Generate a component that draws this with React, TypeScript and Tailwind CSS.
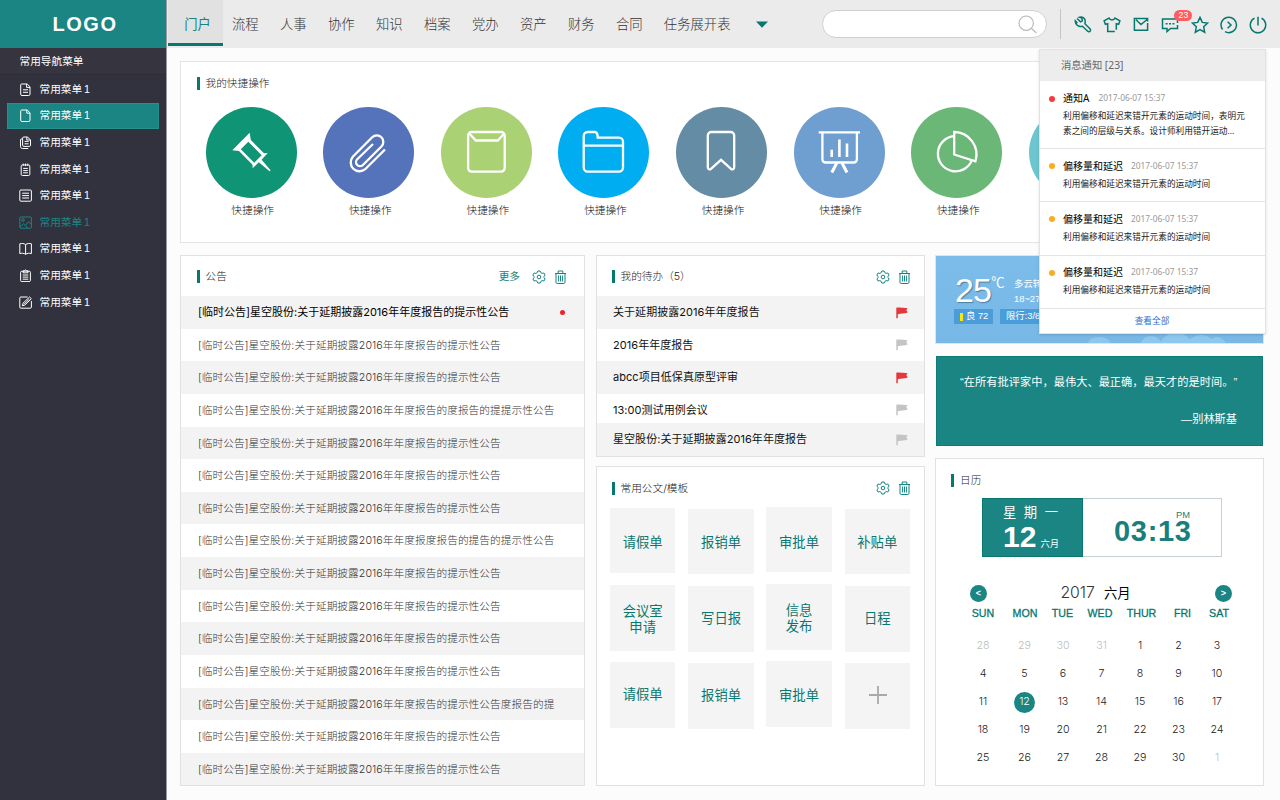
import { ReactNode } from "react";

const navItems = ["流程", "人事", "协作", "知识", "档案", "党办", "资产", "财务", "合同", "任务展开表"];

const notices = [
  "[临时公告]星空股份:关于延期披露2016年年度报告的提示性公告",
  "[临时公告]星空股份:关于延期披露2016年年度报告的提示性公告",
  "[临时公告]星空股份:关于延期披露2016年年度报告的提示性公告",
  "[临时公告]星空股份:关于延期披露2016年年度报告的度报告的提提示性公告",
  "[临时公告]星空股份:关于延期披露2016年年度报告的提示性公告",
  "[临时公告]星空股份:关于延期披露2016年年度报告的提示性公告",
  "[临时公告]星空股份:关于延期披露2016年年度报告的提示性公告",
  "[临时公告]星空股份:关于延期披露2016年年度报度报告的提告的提示性公告",
  "[临时公告]星空股份:关于延期披露2016年年度报告的提示性公告",
  "[临时公告]星空股份:关于延期披露2016年年度报告的提示性公告",
  "[临时公告]星空股份:关于延期披露2016年年度报告的提示性公告",
  "[临时公告]星空股份:关于延期披露2016年年度报告的提示性公告",
  "[临时公告]星空股份:关于延期披露2016年年度报告的提示性公告度报告的提",
  "[临时公告]星空股份:关于延期披露2016年年度报告的提示性公告",
  "[临时公告]星空股份:关于延期披露2016年年度报告的提示性公告",
];

const todos = [
  { text: "关于延期披露2016年年度报告", urgent: true, row: "h-[33px] bg-[#f3f3f3]" },
  { text: "2016年年度报告", urgent: false, row: "h-8" },
  { text: "abcc项目低保真原型评审", urgent: true, row: "h-[33px] bg-[#f3f3f3]" },
  { text: "13:00测试用例会议", urgent: false, row: "h-[29px] pt-[3px]" },
  { text: "星空股份:关于延期披露2016年年度报告", urgent: false, row: "h-[33px] bg-[#f3f3f3]" },
];

const messages = [
  { title: "偏移量和延迟", time: "2017-06-07 15:37", body: "利用偏移和延迟来错开元素的运动时间" },
  { title: "偏移量和延迟", time: "2017-06-07 15:37", body: "利用偏移和延迟来错开元素的运动时间" },
  { title: "偏移量和延迟", time: "2017-06-07 15:37", body: "利用偏移和延迟来错开元素的运动时间" },
];

const templateColumns = [
  {
    offset: "mt-px",
    tiles: [
      { text: "请假单", pad: "pt-[4px]" },
      { text: "会议室\n申请", pad: "pt-[5px]" },
      { text: "请假单", pad: "" },
    ],
  },
  {
    offset: "mt-[2px] ml-[13px]",
    tiles: [
      { text: "报销单", pad: "pt-[2px]" },
      { text: "写日报", pad: "" },
      { text: "报销单", pad: "" },
    ],
  },
  {
    offset: "ml-[12.500px]",
    tiles: [
      { text: "审批单", pad: "pt-[6px]" },
      { text: "信息\n发布", pad: "pt-[4px]" },
      { text: "审批单", pad: "pt-[3px]" },
    ],
  },
  {
    offset: "mt-[2px] ml-[13.400px]",
    tiles: [
      { text: "补贴单", pad: "pr-[1px] pt-[2px]" },
      { text: "日程", pad: "pr-[1px]" },
      { text: "+", pad: "pb-[3px]" },
    ],
  },
];

const weekdays = ["SUN", "MON", "TUE", "WED", "THUR", "FRI", "SAT"];
const days = [28, 29, 30, 31, ...Array.from({ length: 30 }, (_, i) => i + 1), 1];

const menuIcons: ReactNode[] = [
  <>
    <path d="M2.5 1h5.7l2.8 2.8v7.4a1.3 1.3 0 0 1-1.3 1.3H3a1.3 1.3 0 0 1-1.3-1.3V1.8A.8.8 0 0 1 2.5 1z" />
    <path d="M7.6 1v3.4H11M4 6.8h5M4 9.3h5" />
  </>,
  <>
    <path d="M2.8 1h5.4l2.8 2.8v7.4a1.3 1.3 0 0 1-1.3 1.3H3a1.3 1.3 0 0 1-1.3-1.3V2.1A1.1 1.1 0 0 1 2.8 1z" />
    <path d="M7.8 1v3.2H11" />
  </>,
  <>
    <path d="M5 1h3.6L11.5 4v5.2a1.2 1.2 0 0 1-1.2 1.2H4.8a1.2 1.2 0 0 1-1.2-1.2V2.2A1.2 1.2 0 0 1 4.8 1z" />
    <path d="M3.6 2.6 1.5 3.4v7.2c0 1 .8 1.9 1.9 1.9h5.8M5.6 5.4h4M5.6 7.8h4M7.8 1v3h3.4" />
  </>,
  <>
    <rect x="2.2" y="2" width="8.6" height="10.5" rx="1.2" />
    <path d="M4.2.6v2.2M6.5.6v2.2M8.8.6v2.2M4.2 5.4h4.6M4.2 7.6h4.6M4.2 9.8h4.6" />
  </>,
  <>
    <rect x=".8" y="1" width="11.6" height="11.2" rx="1" />
    <path d="M3.2 4.2h6.8M3.2 6.6h6.8M3.2 9h6.8" />
  </>,
  <>
    <rect x=".8" y="1" width="11.6" height="11.2" rx="1" />
    <circle cx="4" cy="4.1" r="1.3" />
    <path d="m1 11 3.4-3.2 2 1.8 3.2-4 2.8 3M6.4 9.6l2.4 2.4" />
  </>,
  <path d="M.8 1.8c2-.6 4-.5 5.8.8 1.8-1.3 3.8-1.4 5.8-.8v9.8c-2-.6-4-.5-5.8.7-1.8-1.2-3.8-1.3-5.8-.7zM6.6 2.6v9.7" />,
  <>
    <rect x="1.6" y="2.2" width="9.8" height="10.4" rx="1.2" />
    <path d="M4 3.8V2l1.5-.4a1.1 1.1 0 0 1 2 0L9 2v1.8zM3.7 6h5.6M3.7 8.1h5.6M3.7 10.2h5.6" />
  </>,
  <>
    <path d="M8.6 1H1.8a1 1 0 0 0-1 1v9.2a1 1 0 0 0 1 1h9.6a1 1 0 0 0 1-1V5" />
    <path d="m3.4 9.8.6-2.6L10.6 1l1.7 1.7-6.5 6.4zM5 8.3l5-5" />
  </>,
];

const shortcuts: { color: string; icon: ReactNode }[] = [
  {
    color: "bg-[#0f9575]",
    icon: (
      <path
        d="M43.7 25.7 44.8 33 58 46.3 61.7 46 55.6 52.7 64.6 63.2 63.5 64.3 52.8 55.3 46.7 61.2 46.5 57.7 33 44 26.3 43.3zM42.3 34.8 34.8 42.3 48.2 55.8 55.7 48.3z"
        fill="#fff"
        fillRule="evenodd"
        stroke="none"
      />
    ),
  },
  {
    color: "bg-[#5573ba]",
    icon: (
      <path d="M62 42.5 42.2 62.2A8.8 8.8 0 0 1 29.8 49.8L49.2 30.3A6.5 6.5 0 0 1 58.4 39.5L39.9 58A4 4 0 0 1 34.2 52.3L50 37" />
    ),
  },
  {
    color: "bg-[#aad173]",
    icon: (
      <>
        <rect x="27.1" y="25" width="36.6" height="39.6" rx="3.5" />
        <path d="m28.3 26.5 6.5 7h22l6.5-7" />
      </>
    ),
  },
  {
    color: "bg-[#00adf1]",
    icon: (
      <path d="M25.7 60.6V29a4 4 0 0 1 4-4h7q3 0 3 5.7H61a4 4 0 0 1 4 4v25.9a4 4 0 0 1-4 4H29.7a4 4 0 0 1-4-4zM25.7 38.7H65" />
    ),
  },
  {
    color: "bg-[#658ca5]",
    icon: (
      <path d="M31.8 28.5a3.5 3.5 0 0 1 3.5-3.5h19.4a3.5 3.5 0 0 1 3.5 3.5v31.7c0 2-1.8 2.8-3.2 1.6L45 52.8l-10 9c-1.4 1.2-3.2.4-3.2-1.6z" />
    ),
  },
  {
    color: "bg-[#6f9fd1]",
    icon: (
      <>
        <path d="M24.7 25.3H66M28.4 26v26.3a3.2 3.2 0 0 0 3.2 3.2h28.1a3.2 3.2 0 0 0 3.2-3.2V26" />
        <path d="M37.7 42.7V50M45.4 32.5V50M53 36.5V50" strokeWidth="2.6" />
        <path d="m42.8 56-5 9.5M48 56l5 9.5" strokeWidth="3" />
      </>
    ),
  },
  {
    color: "bg-[#6bb777]",
    icon: (
      <>
        <path d="M43 29.2a17.6 17.6 0 1 0 17.8 24.2" />
        <path d="M43.2 25v22.5l21.2 6.8A22.5 22.5 0 0 0 43.2 25z" />
      </>
    ),
  },
  { color: "bg-[#6dc6cf]", icon: null },
];

const toolIcons: ReactNode[] = [
  // wrench
  <path d="M3.1 2.5 6.5 5.9 8.4 4.9 7.8 2 5.6 1.3C8.4.4 11.6 2.4 11.2 6l-.3 1.7 5.1 5.1a1.6 1.6 0 0 1-2.3 2.4L8.5 10.3C5 11.4.9 8.8 1.3 4.8l2.1 2.4" />,
  // shirt
  <path d="M11.8 15.5H4.7V7.7l-2.3.6-1.3-3.5L6 2c1 2.5 5 2.5 6 0l4.9 2.8-1.3 3.5-2.3-.6v6" />,
  // mail
  <path d="M15.6 5.5V2.4H2.4v11.8h13.2V7M4 3.8l5 4.8 6.4-5.4" />,
  // chat
  <path d="M16.5 7V3H1.5v9.5H6v3l3.5-3h7V9M4.6 7.8h2M8 7.8h2M11.4 7.8h2" />,
  // star
  <path d="m9 1.4 2.3 5 5.3.7-3.9 3.7 1 5.4L9 13.6l-4.7 2.6 1-5.4-3.9-3.7 5.3-.7z" />,
  // forward
  <path d="M2.6 13.5A7.7 7.7 0 1 1 5 15.6M7.6 5.8 11 9l-3.4 3.2" />,
  // power
  <path d="M5.5 2.2a7.7 7.7 0 1 0 7 0M9 .8v8.7" />,
];

function SectionTitle({ children }: { children: ReactNode }) {
  return (
    <div className="flex items-center">
      <div className="h-[13px] w-[3px] bg-[#08776f]" />
      <div className="ml-[6px] pt-px font-['Inter','Noto_Sans_CJK_SC',sans-serif] text-[10.67px] leading-[12px] font-light text-[#222]">
        {children}
      </div>
    </div>
  );
}

function CardActions({ more }: { more?: boolean }) {
  return (
    <div className="flex items-center text-[#16837f]">
      {more && <span className="mr-3 text-[10.67px] leading-none">更多</span>}
      <svg className="h-[14px] w-[14px]" viewBox="0 0 14 14" fill="none" stroke="currentColor">
        <path d="M5.8 1h2.4l.6 1.7 1.3.7 1.8-.4 1.2 2L12 6.5v1.2L13.1 9l-1.2 2-1.8-.4-1.3.8-.6 1.6H5.8l-.6-1.6-1.3-.8-1.8.4L.9 9 2 7.7V6.5L.9 5l1.2-2 1.8.4 1.3-.7z" />
        <circle cx="7" cy="7" r="1.8" />
      </svg>
      <svg className="ml-[8px] h-[14px] w-[13px]" viewBox="0 0 13 14" fill="none" stroke="currentColor">
        <path d="M1 3.5h11M4.2 3.3V1h4.6v2.3M2 3.7v8.6c0 .7.5 1.2 1.2 1.2h6.6c.7 0 1.2-.5 1.2-1.2V3.7M4.6 5.5v6M6.5 5.5v6M8.4 5.5v6" />
      </svg>
    </div>
  );
}

function Flag({ urgent }: { urgent: boolean }) {
  return (
    <svg className={urgent ? "h-[12px] w-[12px] text-[#e2383c]" : "h-[12px] w-[12px] text-[#c4c4c4]"} viewBox="0 0 12 12">
      <path d="M.3.7C4 .2 6 1.3 11.5.9L10.3 3l1.5 2.6C8 7.2 5 6.4 1.8 7.2V11.3H.3z" fill="currentColor" />
    </svg>
  );
}

function Sidebar() {
  return (
    <aside className="h-full w-[167px] shrink-0 border-r border-[#9a9aa0] bg-[#32323e] text-white">
      <div className="flex h-12 items-center justify-center bg-[#1a8582] pl-[4px] text-[20px] font-bold tracking-[1.5px]">
        LOGO
      </div>
      <div className="flex h-[27px] items-center border-b border-[#2d2d38] bg-[#36353f] pl-[19.5px] text-[10.67px]">
        常用导航菜单
      </div>
      <ul className="px-[7px] pt-[0.9px]">
        {menuIcons.map((icon, i) => (
          <li
            key={i}
            className={
              "flex h-[26.62px] items-center text-[10.67px] " +
              (i === 1
                ? "border border-[#23918d] bg-[#1a8582] pl-[11px]"
                : i === 5
                  ? "pl-[12px] text-[#1a8582]"
                  : "pl-[12px]")
            }
          >
            <svg className="h-[13px] w-[13px]" viewBox="0 0 13 13" fill="none" stroke="currentColor">
              {icon}
            </svg>
            <span className="mb-px ml-[7.5px] [word-spacing:-1px]">常用菜单 1</span>
          </li>
        ))}
      </ul>
    </aside>
  );
}

function TopBar() {
  return (
    <header className="flex h-12 items-center bg-[#ebebeb] pl-px text-[13.33px] text-[#333]">
      <div className="flex h-[46px] w-[55px] items-center justify-center self-start border-b-[3px] border-[#08776f] bg-[#e1e1e1] pt-[6px] pl-[4px] text-[#16837f]">
        门户
      </div>
      <nav className="ml-[9px] flex gap-[21.34px] pt-[2px] font-light">
        {navItems.map((item) => (
          <span key={item} className="whitespace-nowrap">
            {item}
          </span>
        ))}
      </nav>
      <svg className="ml-[25.5px] h-[7px] w-[12px]" viewBox="0 0 12 7">
        <path d="M0 .5h12L6 6.8z" fill="#08776f" />
      </svg>
      <div className="ml-[53.5px] flex h-[28px] w-[225px] items-center justify-end rounded-full border border-[#d0d0d0] bg-white pr-[9px]">
        <svg className="h-[19px] w-[19px]" viewBox="0 0 19 19" fill="none" stroke="#b9b9b9" strokeWidth="1.2">
          <circle cx="8.2" cy="8.2" r="7.2" />
          <path d="m13.5 13.5 5 4.5" />
        </svg>
      </div>
      <div className="ml-[13px] h-[30px] w-px bg-[#c4c4c4]" />
      <div className="ml-[13px] flex gap-[11.3px] pt-[2px] text-[#08776f]">
        {toolIcons.map((icon, i) => (
          <div key={i} className="relative">
            <svg className="h-[18px] w-[18px]" viewBox="0 0 18 18" fill="none" stroke="currentColor" strokeWidth="1.5">
              {icon}
            </svg>
            {i === 3 && (
              <span className="absolute -top-[6px] left-[13px] flex h-[11px] w-[18px] items-center justify-center rounded-full bg-[#ff5c60] text-[8.67px] leading-none text-white">
                23
              </span>
            )}
          </div>
        ))}
      </div>
    </header>
  );
}

function MessagePopup() {
  return (
    <div className="absolute top-[49px] left-[1039px] z-20 h-[285px] w-[227px] border border-[#e2e2e2] bg-white font-['Noto_Sans','Noto_Sans_CJK_SC',sans-serif] text-[8.67px] text-[#222] shadow-sm">
      <div className="flex h-[31px] items-center bg-[#ededed] pl-[21px] text-[10.3px] text-[#666]">消息通知 [23]</div>
      <div className="h-[68px] border-b border-[#e4e4e4] pt-[10px] pl-[23px]">
        <div className="-ml-[14px] flex h-[15px] items-center">
          <span className="h-[6px] w-[6px] rounded-full bg-[#fb3a3d]" />
          <span className="ml-[8px] text-[10px] text-black">通知A</span>
          <span className="ml-[9px] text-[8.33px] text-[#999]">2017-06-07 15:37</span>
        </div>
        <div className="mt-[3px] leading-[15.33px] whitespace-nowrap">
          利用偏移和延迟来错开元素的运动时间，表明元
          <br />
          素之间的层级与关系。设计师利用错开运动...
        </div>
      </div>
      {messages.map((m, i) => (
        <div key={i} className="h-[53.33px] border-b border-[#e4e4e4] pt-[9.5px] pl-[23px]">
          <div className="-ml-[14px] flex h-[15px] items-center">
            <span className="h-[6px] w-[6px] rounded-full bg-[#fcab22]" />
            <span className="ml-[8px] text-[10px] text-black">{m.title}</span>
            <span className="ml-[8px] text-[8.33px] text-[#999]">{m.time}</span>
          </div>
          <div className="mt-[3px] leading-[15.33px]">{m.body}</div>
        </div>
      ))}
      <div className="flex h-[24px] items-center justify-center pt-px pr-px text-[#2a6cc4]">查看全部</div>
    </div>
  );
}

function Weather() {
  return (
    <div className="relative h-[89px] overflow-hidden border border-[#dbe6ee] bg-gradient-to-b from-[#7cbcea] to-[#78b8e6] text-white">
      <svg className="absolute right-0 bottom-0 h-[30px] w-[180px]" viewBox="0 0 180 30" fill="#8dc7ed">
        <ellipse cx="16" cy="30" rx="11" ry="6" />
        <circle cx="68" cy="34" r="11" />
        <circle cx="93" cy="38" r="18" />
        <circle cx="118" cy="38" r="16" />
        <circle cx="134" cy="33" r="9" />
      </svg>
      <div className="relative flex pt-[18px] pl-[19px]">
        <div className="flex h-[32px] items-start">
          <span className="text-[34px] leading-[32px] tracking-[-0.8px] [text-shadow:1px_1px_1px_#4a7fa8]">25</span>
          <span className="text-[13.33px] leading-[18px]">℃</span>
        </div>
        <div className="ml-[9.5px] pt-[3px] text-[9.33px] leading-[14.5px] whitespace-nowrap">
          多云转晴
          <br />
          18~27℃
        </div>
      </div>
      <div className="relative mt-[3px] flex gap-[7px] pl-[18px] text-[9.33px]">
        <div className="flex h-[15px] w-[39px] items-center bg-[#4b9dda] pl-[6px]">
          <span className="h-[8px] w-[3px] bg-[#fbe610]" />
          <span className="ml-[3px]">良 72</span>
        </div>
        <div className="flex h-[15px] w-[52px] items-center bg-[#4b9dda] pl-[6px] whitespace-nowrap">限行:3/8</div>
      </div>
    </div>
  );
}

function Calendar() {
  return (
    <section className="mt-3 h-[328px] border border-[#e1e1e1] bg-white">
      <div className="flex pt-[15px] pl-[15px]">
        <SectionTitle>日历</SectionTitle>
      </div>
      <div className="mt-[11px] ml-[46px] flex h-[59px] w-[240px] border border-[#c8d0d3]">
        <div className="-my-px -ml-px w-[101px] border border-[#08776f] bg-[#1a8582] pl-[20px] text-white">
          <div className="pt-[4px] text-[13.33px] leading-[20px] tracking-[7.5px]">星期一</div>
          <div className="flex items-baseline leading-[27px]">
            <span className="text-[30px] font-bold">12</span>
            <span className="ml-[4px] text-[9.33px]">六月</span>
          </div>
        </div>
        <div className="relative flex flex-1 items-center pt-[8px] pl-[31px] text-[#1a7f7c]">
          <span className="text-[29px] leading-none font-bold tracking-[0.7px]">03:13</span>
          <span className="absolute top-[11px] left-[93px] text-[9.33px] leading-[11px]">PM</span>
        </div>
      </div>
      <div className="mt-[27px] flex items-center justify-between pr-[31px] pl-[34px]">
        <button className="h-[17px] w-[17px] rounded-full bg-[#1a8582] text-[9px] leading-none font-bold text-white">&lt;</button>
        <div className="mr-[11px] text-[13.33px] leading-[17px] text-black">
          <span className="mr-[9px] font-['Inter'] text-[15.8px] font-light text-[#333]">2017</span>
          六月
        </div>
        <button className="h-[17px] w-[17px] rounded-full bg-[#1a8582] text-[9px] leading-none font-bold text-white">&gt;</button>
      </div>
      <div className="mt-[5px] ml-[25px] grid grid-cols-[44px_40px_35px_40px_43px_39px_34px] text-center text-[10.67px] leading-[12px] text-[#08776f] [-webkit-text-stroke:0.3px]">
        {weekdays.map((d) => (
          <span key={d}>{d}</span>
        ))}
      </div>
      <div className="mt-[13px] ml-[25px] grid grid-cols-[44px_39px_38px_39px_38px_39px_38px] font-['Inter'] text-[10.67px] font-light text-[#222]">
        {days.map((d, i) => (
          <div key={i} className="flex h-[28px] items-center justify-center">
            <span
              className={
                i === 15
                  ? "flex h-[21px] w-[21px] items-center justify-center rounded-full bg-[#1a8582] text-white"
                  : i < 4 || i === 34
                    ? "text-[#bdbdbd]"
                    : ""
              }
            >
              {d}
            </span>
          </div>
        ))}
      </div>
    </section>
  );
}

export default function App() {
  return (
    <div className="relative flex h-[800px] w-[1280px] overflow-hidden bg-[#fcfcfc] font-['Liberation_Sans','Noto_Sans_CJK_SC',sans-serif] [text-spacing-trim:space-all]">
      <Sidebar />
      <div className="flex-1">
        <TopBar />
        <main className="pt-[13px] pl-[13px]">
          {/* Shortcuts */}
          <section className="h-[182px] w-[1084px] border border-[#e4e4e4] bg-white">
            <div className="flex pt-[15px] pl-[15.5px]">
              <SectionTitle>我的快捷操作</SectionTitle>
            </div>
            <div className="mt-[17px] ml-[24.7px] flex gap-[26.6px]">
              {shortcuts.map((s, i) => (
                <div key={i} className="flex shrink-0 flex-col items-center">
                  <div className={"h-[91px] w-[91px] rounded-full " + s.color}>
                    <svg className="h-full w-full" viewBox="0 0 91 91" fill="none" stroke="#fff" strokeWidth="2.3">
                      {s.icon}
                    </svg>
                  </div>
                  {s.icon && (
                    <span className="mt-[6px] ml-[3px] text-[10.67px] leading-[12px] font-light text-[#111]">快捷操作</span>
                  )}
                </div>
              ))}
            </div>
          </section>

          <div className="mt-3 flex h-[531px]">
            {/* Announcements */}
            <section className="w-[405px] border border-[#e1e1e1] bg-white">
              <div className="flex h-[40px] items-center justify-between pt-px pr-[17px] pl-[15.5px]">
                <SectionTitle>公告</SectionTitle>
                <CardActions more />
              </div>
              {notices.map((n, i) => (
                <div
                  key={i}
                  className={
                    "flex h-[32.63px] items-center justify-between pr-[19px] pl-[17px] font-['Inter','Noto_Sans_CJK_SC',sans-serif] whitespace-nowrap odd:bg-white even:bg-[#f3f3f3] " +
                    (i === 0
                      ? "text-[11px] text-black"
                      : "pt-[1.4px] text-[10.67px] font-light tracking-[0.07px] text-[#333]")
                  }
                >
                  {n}
                  {i === 0 && <span className="h-[5px] w-[5px] rounded-full bg-[#e8262b]" />}
                </div>
              ))}
            </section>

            <div className="ml-[11px] w-[329px]">
              <section className="h-[202px] border border-[#e1e1e1] bg-white">
                <div className="flex h-[40px] items-center justify-between pt-px pr-[13px] pl-[14.5px]">
                  <SectionTitle>我的待办（5）</SectionTitle>
                  <CardActions />
                </div>
                {todos.map((t) => (
                  <div
                    key={t.text}
                    className={
                      "flex items-center justify-between pr-[16px] pl-[16px] font-['Inter','Noto_Sans_CJK_SC',sans-serif] text-[11px] tracking-[0.05px] text-[#111] " +
                      t.row
                    }
                  >
                    {t.text}
                    <Flag urgent={t.urgent} />
                  </div>
                ))}
              </section>

              {/* Templates */}
              <section className="mt-[9px] h-[320px] border border-[#e1e1e1] bg-white">
                <div className="flex h-[40px] items-center justify-between pt-[2px] pr-[13px] pl-[14.5px]">
                  <SectionTitle>常用公文/模板</SectionTitle>
                  <CardActions />
                </div>
                <div className="flex pl-[13px]">
                  {templateColumns.map((col, i) => (
                    <div key={i} className={"flex flex-col gap-[11.8px] " + col.offset}>
                      {col.tiles.map((tile, j) => (
                        <div
                          key={j}
                          className={
                            "flex h-[65.4px] w-[65.4px] items-center justify-center bg-[#f4f4f4] text-center text-[13.33px] leading-[16px] whitespace-pre text-[#08776f] " +
                            tile.pad
                          }
                        >
                          {tile.text === "+" ? (
                            <svg className="h-[18px] w-[18px]" viewBox="0 0 18 18" stroke="#a9a9a9" strokeWidth="1.8">
                              <path d="M9 0v18M0 9h18" />
                            </svg>
                          ) : (
                            tile.text
                          )}
                        </div>
                      ))}
                    </div>
                  ))}
                </div>
              </section>
            </div>

            <div className="ml-[10px] w-[329px]">
              <Weather />
              <section className="mx-px mt-3 h-[90px] border border-[#0c7b76] bg-[#1a8582] pt-[17px] text-[11.2px] text-white">
                <div className="pl-[23px] leading-[17px] tracking-[0.05px] whitespace-nowrap">“在所有批评家中，最伟大、最正确，最天才的是时间。”</div>
                <div className="mt-[20px] pr-[25px] text-right leading-[17px]">—别林斯基</div>
              </section>
              <Calendar />
            </div>
          </div>
        </main>
      </div>
      <MessagePopup />
    </div>
  );
}
